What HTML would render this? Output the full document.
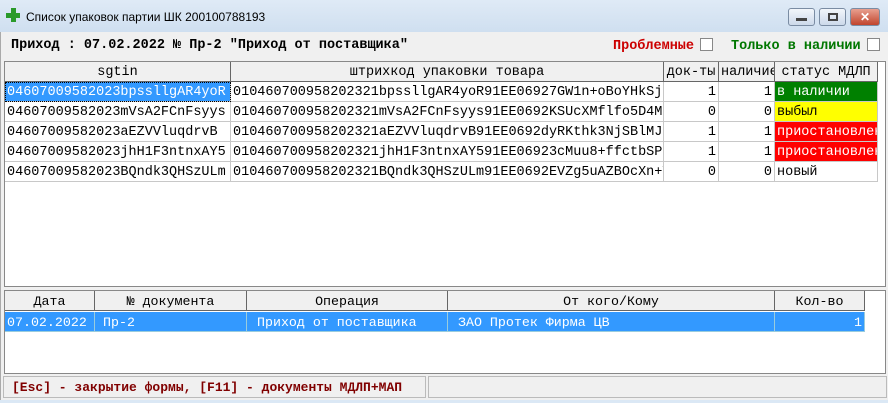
<!DOCTYPE html><html><head><meta charset="utf-8"><style>
*{box-sizing:border-box;margin:0;padding:0}
body{width:888px;height:403px;background:#dbe8f5;font-family:"Liberation Mono",monospace;position:relative;overflow:hidden}
.tb{position:absolute;left:0;top:0;width:888px;height:32px;background:linear-gradient(#dfeaf6,#cfdff0)}
.title{position:absolute;left:26px;top:10px;font:12px "Liberation Sans",sans-serif;color:#000}
.btn{position:absolute;top:8px;height:18px;border:1px solid #7a8ca3;border-radius:3px;background:linear-gradient(#f2f6fb,#ccd9ea)}
.main{position:absolute;left:0;top:32px;width:888px;height:368px;background:#f0f0f0;border-left:1px solid #aaa}
.abs{position:absolute;white-space:nowrap;overflow:hidden}
.cb{display:inline-block;width:13px;height:13px;border:1px solid #888;background:#fff;vertical-align:-2px;margin-left:6px}
.grid{position:absolute;background:#fff;border:1px solid #888}
.cell{position:absolute;height:20px;line-height:22px;font-size:13.5px;border-right:1px solid #c8c8c8;border-bottom:1px solid #c8c8c8;padding:0 2px;overflow:hidden;white-space:nowrap}
.hd{background:#f0f0f0;text-align:center;border-right:1px solid #666;border-bottom:1px solid #666}
.r{text-align:right}
.hd2{font-size:13.3px}
.sel{background:#3399ff;color:#fff;border-color:#9cd}
</style></head><body>
<div class="tb">
<div class="abs" style="left:6px;top:8px;width:14px;height:14px"><div style="position:absolute;left:5px;top:0;width:5px;height:14px;background:#2a9a2a"></div><div style="position:absolute;left:0;top:5px;width:14px;height:5px;background:#2a9a2a"></div></div>
<div class="title">Список упаковок партии  ШК 200100788193</div>
<div class="btn" style="left:788px;width:27px"><div style="margin:9px auto 0;width:11px;height:3px;background:#444"></div></div>
<div class="btn" style="left:819px;width:27px"><div style="margin:4px auto 0;width:10px;height:8px;border:2px solid #444"></div></div>
<div class="btn" style="left:850px;width:30px;background:linear-gradient(#e8a090,#c0442c);color:#fff;text-align:center;font:bold 12px/16px 'Liberation Sans'">✕</div>
</div>
<div class="main">
<div class="abs" style="left:10px;top:6px;font-weight:bold;font-size:13.5px">Приход : 07.02.2022 № Пр-2 "Приход от поставщика"</div>
<div class="abs" style="left:612px;top:6px;font-weight:bold;font-size:13.5px;color:#c00">Проблемные<span class="cb"></span></div>
<div class="abs" style="left:730px;top:6px;font-weight:bold;font-size:13.5px;color:#070">Только в наличии<span class="cb"></span></div>
<div class="grid" style="left:3px;top:29px;width:882px;height:226px">
<div class="cell hd" style="left:0;top:0;width:226px">sgtin</div>
<div class="cell hd" style="left:226px;top:0;width:433px">штрихкод упаковки товара</div>
<div class="cell hd" style="left:659px;top:0;width:55px">док-ты</div>
<div class="cell hd" style="left:714px;top:0;width:56px">наличие</div>
<div class="cell hd" style="left:770px;top:0;width:103px">статус МДЛП</div>

<div class="cell" style="left:0;top:20px;width:226px;background:#3399ff;color:#fff;outline:1px dotted #000;outline-offset:-1px">04607009582023bpssllgAR4yoR</div>
<div class="cell" style="left:226px;top:20px;width:433px">010460700958202321bpssllgAR4yoR91EE06927GW1n+oBoYHkSjP</div>
<div class="cell r" style="left:659px;top:20px;width:55px">1</div>
<div class="cell r" style="left:714px;top:20px;width:56px">1</div>
<div class="cell" style="left:770px;top:20px;width:103px;background:#008000;color:#fff">в наличии</div>

<div class="cell" style="left:0;top:40px;width:226px">04607009582023mVsA2FCnFsyys</div>
<div class="cell" style="left:226px;top:40px;width:433px">010460700958202321mVsA2FCnFsyys91EE0692KSUcXMflfo5D4MJ</div>
<div class="cell r" style="left:659px;top:40px;width:55px">0</div>
<div class="cell r" style="left:714px;top:40px;width:56px">0</div>
<div class="cell" style="left:770px;top:40px;width:103px;background:#ffff00">выбыл</div>

<div class="cell" style="left:0;top:60px;width:226px">04607009582023aEZVVluqdrvB</div>
<div class="cell" style="left:226px;top:60px;width:433px">010460700958202321aEZVVluqdrvB91EE0692dyRKthk3NjSBlMJ</div>
<div class="cell r" style="left:659px;top:60px;width:55px">1</div>
<div class="cell r" style="left:714px;top:60px;width:56px">1</div>
<div class="cell" style="left:770px;top:60px;width:103px;background:#ff0000;color:#fff">приостановлен</div>

<div class="cell" style="left:0;top:80px;width:226px">04607009582023jhH1F3ntnxAY5</div>
<div class="cell" style="left:226px;top:80px;width:433px">010460700958202321jhH1F3ntnxAY591EE06923cMuu8+ffctbSPk</div>
<div class="cell r" style="left:659px;top:80px;width:55px">1</div>
<div class="cell r" style="left:714px;top:80px;width:56px">1</div>
<div class="cell" style="left:770px;top:80px;width:103px;background:#ff0000;color:#fff">приостановлен</div>

<div class="cell" style="left:0;top:100px;width:226px">04607009582023BQndk3QHSzULm</div>
<div class="cell" style="left:226px;top:100px;width:433px">010460700958202321BQndk3QHSzULm91EE0692EVZg5uAZBOcXn+Y</div>
<div class="cell r" style="left:659px;top:100px;width:55px">0</div>
<div class="cell r" style="left:714px;top:100px;width:56px">0</div>
<div class="cell" style="left:770px;top:100px;width:103px">новый</div>
</div>

<div class="grid" style="left:3px;top:258px;width:882px;height:84px">
<div class="cell hd hd2" style="left:0;top:0;width:90px">Дата</div>
<div class="cell hd hd2" style="left:90px;top:0;width:152px">№ документа</div>
<div class="cell hd hd2" style="left:242px;top:0;width:201px">Операция</div>
<div class="cell hd hd2" style="left:443px;top:0;width:327px">От кого/Кому</div>
<div class="cell hd hd2" style="left:770px;top:0;width:90px">Кол-во</div>
<div class="cell hd2 sel" style="left:0;top:21px;width:90px">07.02.2022</div>
<div class="cell hd2 sel" style="left:90px;top:21px;width:152px;padding-left:8px">Пр-2</div>
<div class="cell hd2 sel" style="left:242px;top:21px;width:201px;padding-left:10px">Приход от поставщика</div>
<div class="cell hd2 sel" style="left:443px;top:21px;width:327px;padding-left:10px">ЗАО Протек Фирма ЦВ</div>
<div class="cell hd2 r sel" style="left:770px;top:21px;width:90px">1</div>
</div>

<div class="abs" style="left:2px;top:344px;width:423px;height:22px;border:1px solid #bbb;color:#800000;font:bold 13px/21px 'Liberation Mono',monospace;padding-left:8px">[Esc] - закрытие формы, [F11] - документы МДЛП+МАП</div>
<div class="abs" style="left:427px;top:344px;width:459px;height:22px;border:1px solid #bbb"></div>
</div>
</body></html>
